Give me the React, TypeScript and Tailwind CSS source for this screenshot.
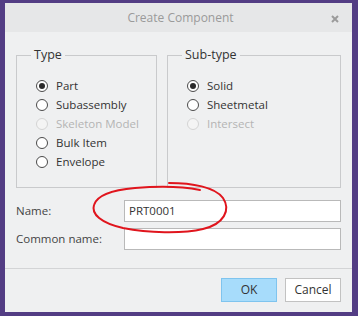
import React from 'react';

interface RadioItem {
  label: string;
  checked?: boolean;
  disabled?: boolean;
}

const typeItems: RadioItem[] = [
  { label: 'Part', checked: true },
  { label: 'Subassembly' },
  { label: 'Skeleton Model', disabled: true },
  { label: 'Bulk Item' },
  { label: 'Envelope' },
];

const subTypeItems: RadioItem[] = [
  { label: 'Solid', checked: true },
  { label: 'Sheetmetal' },
  { label: 'Intersect', disabled: true },
];

function Radio({ item }: { item: RadioItem }) {
  return (
    <div className="flex items-center h-[19px] gap-[8px]">
      <span
        className={
          item.disabled
            ? 'w-[12px] h-[12px] rounded-full border border-[#d4d4d4] bg-[#f4f4f4] flex items-center justify-center'
            : 'w-[12px] h-[12px] rounded-full border border-[#4a4a4a] bg-white flex items-center justify-center'
        }
      >
        {item.checked && <span className="w-[6px] h-[6px] rounded-full bg-[#2a2a2a]" />}
      </span>
      <span className={item.disabled ? 'text-[#b4b4b4]' : 'text-[#333]'}>{item.label}</span>
    </div>
  );
}

function Group({ title, items, className }: { title: string; items: RadioItem[]; className: string }) {
  return (
    <fieldset className={`border border-[#c9cacc] pl-[14px] pr-2 pt-[13px] pb-[16px] ${className}`}>
      <legend className="px-[3px] text-[12.5px] text-[#333] leading-[16px]">{title}</legend>
      <div className="flex flex-col pl-[5px]">
        {items.map((item) => (
          <Radio key={item.label} item={item} />
        ))}
      </div>
    </fieldset>
  );
}

export default function App() {
  return (
    <div
      className="w-[358px] h-[316px] bg-[#533d84] pt-[3px] pl-[5px] pr-[6px] pb-[4px] text-[11.5px]"
      style={{ fontFamily: '"Open Sans", "Noto Sans", sans-serif' }}
    >
      <div className="relative h-full flex flex-col bg-[#eff0f1]">
        {/* Title bar */}
        <div className="h-[29px] bg-[#e6e7e8] flex items-center justify-center relative">
          <span className="text-[#9a9a9a] text-[12px] pl-[4px]">Create Component</span>
          <svg className="absolute right-[13px] top-[12px]" width="8" height="8" viewBox="0 0 8 8">
            <path d="M1 1 L7 7 M7 1 L1 7" stroke="#9b9b9b" strokeWidth="2" />
          </svg>
        </div>

        {/* Body */}
        <div className="flex-1 flex flex-col px-[11px] pt-[15px]">
          <div className="flex gap-[10px]">
            <Group title="Type" items={typeItems} className="w-[141px]" />
            <Group title="Sub-type" items={subTypeItems} className="flex-1" />
          </div>

          <div className="mt-[12px] flex flex-col gap-[6px]">
            <div className="flex items-center">
              <span className="w-[108px] text-[#444]">Name:</span>
              <div className="flex-1 h-[22px] bg-white border border-[#b9b9b9] flex items-center px-[4px] text-[#333]">
                PRT0001
              </div>
            </div>
            <div className="flex items-center">
              <span className="w-[108px] text-[#444]">Common name:</span>
              <div className="flex-1 h-[22px] bg-white border border-[#b9b9b9]" />
            </div>
          </div>
        </div>

        <div className="h-px bg-[#d3d4d6] mb-[9px]" />

        <div className="flex justify-end gap-[8px] px-[11px] pb-[10px]">
          <button className="w-[56px] h-[24px] bg-[#a7dcfb] border border-[#7fc4ee] text-[#333] text-[12px]">
            OK
          </button>
          <button className="w-[56px] h-[24px] bg-white border border-[#c2c2c2] text-[#333] text-[12px]">
            Cancel
          </button>
        </div>

        {/* Red annotation drawn over the name field */}
        <svg className="absolute left-0 top-0 pointer-events-none" width="347" height="309" viewBox="5 3 347 309">
          <path
            d="M169 183 C192 183 215 187 223 198 C231 210 224 224 203 229 C182 234 148 233 123 228 C101 223 91 214 94 205 C97 195 112 190 135 188 C160 186 185 187 200 190"
            fill="none"
            stroke="#e0151d"
            strokeWidth="2"
            strokeLinecap="round"
          />
        </svg>
      </div>
    </div>
  );
}
